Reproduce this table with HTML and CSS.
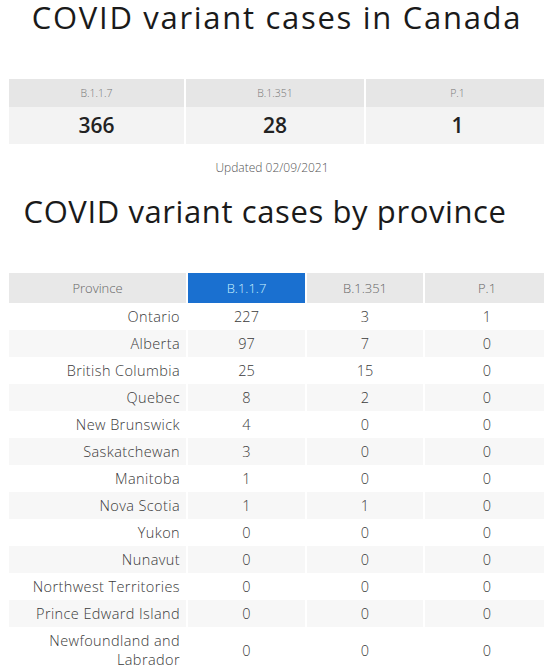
FILE: index.html
```html
<!DOCTYPE html>
<html>
<head>
<meta charset="utf-8">
<link rel="stylesheet" href="styles.css">
</head>
<body>
<h1 class="title title-top">COVID variant cases in Canada</h1>
<div class="summary">
  <div class="s-head">B.1.1.7</div>
  <div class="s-head">B.1.351</div>
  <div class="s-head">P.1</div>
  <div class="s-val">366</div>
  <div class="s-val">28</div>
  <div class="s-val">1</div>
</div>
<p class="updated">Updated 02/09/2021</p>
<h1 class="title title-second">COVID variant cases by province</h1>
<div class="prov">
  <div class="p-head">Province</div>
  <div class="p-head active">B.1.1.7</div>
  <div class="p-head">B.1.351</div>
  <div class="p-head">P.1</div>

  <div class="c name">Ontario</div><div class="c">227</div><div class="c">3</div><div class="c">1</div>
  <div class="c name alt">Alberta</div><div class="c alt">97</div><div class="c alt">7</div><div class="c alt">0</div>
  <div class="c name">British Columbia</div><div class="c">25</div><div class="c">15</div><div class="c">0</div>
  <div class="c name alt">Quebec</div><div class="c alt">8</div><div class="c alt">2</div><div class="c alt">0</div>
  <div class="c name">New Brunswick</div><div class="c">4</div><div class="c">0</div><div class="c">0</div>
  <div class="c name alt">Saskatchewan</div><div class="c alt">3</div><div class="c alt">0</div><div class="c alt">0</div>
  <div class="c name">Manitoba</div><div class="c">1</div><div class="c">0</div><div class="c">0</div>
  <div class="c name alt">Nova Scotia</div><div class="c alt">1</div><div class="c alt">1</div><div class="c alt">0</div>
  <div class="c name">Yukon</div><div class="c">0</div><div class="c">0</div><div class="c">0</div>
  <div class="c name alt">Nunavut</div><div class="c alt">0</div><div class="c alt">0</div><div class="c alt">0</div>
  <div class="c name">Northwest Territories</div><div class="c">0</div><div class="c">0</div><div class="c">0</div>
  <div class="c name alt">Prince Edward Island</div><div class="c alt">0</div><div class="c alt">0</div><div class="c alt">0</div>
  <div class="c name tall">Newfoundland and<br>Labrador</div><div class="c tall">0</div><div class="c tall">0</div><div class="c tall">0</div>
</div>
</body>
</html>
```
FILE: styles.css
```css
html, body {
  margin: 0;
  padding: 0;
  background: #ffffff;
  overflow: hidden;
}
body {
  font-family: "Open Sans", "Noto Sans", sans-serif;
  color: #222;
  width: 544px;
}
.title {
  margin: 0;
  text-align: center;
  font-weight: 400;
  font-size: 31px;
  letter-spacing: 0.6px;
  color: #1a1a1a;
  line-height: 34px;
}
.title-top {
  letter-spacing: 1.7px;
  padding-left: 10px;
}
.summary {
  margin: 45px 0 0 9px;
  width: 540px;
  display: grid;
  grid-template-columns: 175px 178px 183px;
  column-gap: 2px;
}
.s-head {
  background: #e6e6e6;
  height: 28px;
  line-height: 28px;
  text-align: center;
  font-size: 10.5px;
  font-weight: 300;
  color: #777;
}
.s-val {
  background: #f3f3f3;
  height: 37px;
  line-height: 37px;
  text-align: center;
  font-size: 21px;
  font-weight: 600;
  color: #222;
}
.updated {
  margin: 16px 0 0;
  text-align: center;
  font-size: 12px;
  font-weight: 300;
  color: #555;
  line-height: 16px;
}
.title-second {
  margin-top: 18px;
  padding-right: 14px;
}
.prov {
  margin: 45px 0 0 9px;
  width: 540px;
  display: grid;
  grid-template-columns: 177px 117px 116px 124px;
  column-gap: 2px;
}
.p-head {
  background: #e8e8e8;
  height: 30px;
  line-height: 30px;
  text-align: center;
  font-size: 13px;
  font-weight: 300;
  color: #666;
}
.p-head.active {
  background: #1a70d0;
  color: #c8f2ff;
}
.c {
  height: 27px;
  line-height: 27px;
  text-align: center;
  font-size: 14.5px;
  font-weight: 300;
  color: #3a3a3a;
}
.c.name {
  text-align: right;
  padding-right: 6px;
  letter-spacing: 0.4px;
}
.c.alt {
  background: #f7f7f7;
}
.c.tall {
  height: 40px;
  line-height: 19px;
  display: flex;
  align-items: center;
  justify-content: center;
  padding-top: 3px;
}
.c.name.tall {
  justify-content: flex-end;
  text-align: right;
}
```
